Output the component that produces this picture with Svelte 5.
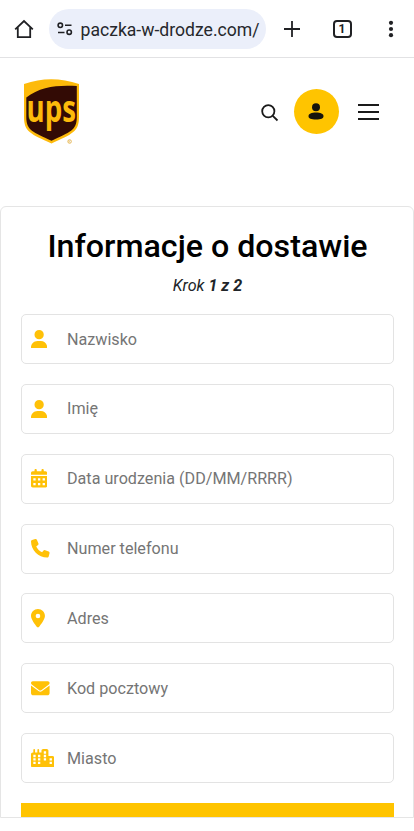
<script lang="ts">
  type Field = { label: string; icon: string; width: number };

  const USER =
    'M224 256A128 128 0 1 0 224 0a128 128 0 1 0 0 256zm-45.7 48C79.8 304 0 383.8 0 482.3C0 498.7 13.3 512 29.7 512H418.3c16.4 0 29.7-13.3 29.7-29.7C448 383.8 368.2 304 269.7 304H178.3z';
  const PHONE =
    'M164.9 24.6c-7.7-18.6-28-28.5-47.4-23.2l-88 24C12.1 30.2 0 46 0 64C0 311.4 200.6 512 448 512c18 0 33.8-12.1 38.6-29.5l24-88c5.3-19.4-4.6-39.7-23.2-47.4l-96-40c-16.3-6.8-35.2-2.1-46.3 11.6L304.7 368C234.3 334.7 177.3 277.7 144 207.3L193.3 167c13.7-11.2 18.4-30 11.6-46.3l-40-96z';
  const PIN =
    'M215.7 499.2C267 435 384 279.4 384 192C384 86 298 0 192 0S0 86 0 192c0 87.4 117 243 168.3 307.2c12.3 15.3 35.1 15.3 47.4 0zM192 128a64 64 0 1 1 0 128 64 64 0 1 1 0-128z';
  const ENVELOPE =
    'M48 64C21.5 64 0 85.5 0 112c0 15.1 7.1 29.3 19.2 38.4L236.8 313.6c11.4 8.5 27 8.5 38.4 0L492.8 150.4c12.1-9.1 19.2-23.3 19.2-38.4c0-26.5-21.5-48-48-48H48zM0 176V384c0 35.3 28.7 64 64 64H448c35.3 0 64-28.7 64-64V176L294.4 339.2c-22.8 17.1-54 17.1-76.8 0L0 176z';

  // square cut-outs for the calendar days and the building windows
  const holes = (points: number[][]) =>
    points.map(([x, y]) => `M${x} ${y}h64v64h-64z`).join('');

  const CALENDAR =
    'M128 0c17.7 0 32 14.3 32 32V64H288V32c0-17.7 14.3-32 32-32s32 14.3 32 32V64h48c26.5 0 48 21.5 48 48v48H0V112C0 85.5 21.5 64 48 64H96V32c0-17.7 14.3-32 32-32zM0 192H448V464c0 26.5-21.5 48-48 48H48c-26.5 0-48-21.5-48-48V192z' +
    holes([[64, 256], [192, 256], [320, 256], [64, 384], [192, 384], [320, 384]]);
  const CITY =
    'M480 48c0-26.5-21.5-48-48-48H336c-26.5 0-48 21.5-48 48V96H224V24c0-13.3-10.7-24-24-24s-24 10.7-24 24V96H112V24c0-13.3-10.7-24-24-24S64 10.7 64 24V96H48C21.5 96 0 117.5 0 144V464c0 26.5 21.5 48 48 48H592c26.5 0 48-21.5 48-48V240c0-26.5-21.5-48-48-48H480V48z' +
    holes([[64, 160], [192, 160], [64, 256], [192, 256], [64, 352], [192, 352],
      [352, 64], [352, 160], [352, 256], [512, 256], [512, 352]]);

  const fields: Field[] = [
    { label: 'Nazwisko', icon: USER, width: 448 },
    { label: 'Imię', icon: USER, width: 448 },
    { label: 'Data urodzenia (DD/MM/RRRR)', icon: CALENDAR, width: 448 },
    { label: 'Numer telefonu', icon: PHONE, width: 512 },
    { label: 'Adres', icon: PIN, width: 384 },
    { label: 'Kod pocztowy', icon: ENVELOPE, width: 512 },
    { label: 'Miasto', icon: CITY, width: 640 },
  ];
</script>

<div class="screen">
  <div class="browser-bar">
    <svg class="home" viewBox="0 0 20 20">
      <path d="M1.2 10.3 10 2l8.8 8.3M3.8 8.5V18.2H16.2V8.5" />
    </svg>
    <div class="address">
      <svg class="tune" viewBox="0 0 16 14">
        <circle cx="3.3" cy="3.3" r="2.2" />
        <path d="M8 3.3H14.5M1 10.5H7.5" />
        <circle cx="12.2" cy="10.2" r="2.2" />
      </svg>
      <span class="url">paczka-w-drodze.com/</span>
    </div>
    <svg class="plus" viewBox="0 0 16 16"><path d="M8 0V16M0 8H16" /></svg>
    <div class="tabs">1</div>
    <svg class="dots" viewBox="0 0 6 18">
      <circle cx="3" cy="2.8" r="2.1" />
      <circle cx="3" cy="9" r="2.1" />
      <circle cx="3" cy="15.2" r="2.1" />
    </svg>
  </div>

  <header>
    <svg class="logo" viewBox="0 0 56 66">
      <path class="gold" d="M0 5Q27-4.500 55 5V38C55 53 48 55 27.500 64.500C7 55 0 53 0 38z" />
      <path class="brown" d="M2.300 18.500C16 7.500 34 5.800 52.800 7V38C52.800 51.500 46 53 27.500 61.800C9 53 2.300 51.500 2.300 38z" />
      <text class="wordmark" x="2.600" y="42.500" textLength="49.500" lengthAdjust="spacingAndGlyphs">ups</text>
      <circle class="mark" cx="45.600" cy="62.500" r="1.800" />
      <text class="reg" x="44.600" y="63.600">R</text>
    </svg>
    <svg class="search" viewBox="0 0 18 18">
      <circle cx="7.3" cy="7.3" r="6.1" />
      <path d="M11.8 11.8 16.5 16.5" />
    </svg>
    <div class="account">
      <svg viewBox="0 0 16 17">
        <circle cx="8" cy="4.3" r="4" />
        <path d="M.5 13.2C.5 11 3.5 9.6 8 9.6s7.5 1.4 7.5 3.600c0 2.300-2.500 3.200-7.500 3.200S.5 15.500.5 13.200z" />
      </svg>
    </div>
    <div class="menu"><i></i><i></i><i></i></div>
  </header>

  <main>
    <h1>Informacje o dostawie</h1>
    <p class="step">Krok <b>1 z 2</b></p>
    <div class="fields">
      {#each fields as field}
        <div class="field">
          <span class="icon">
            <svg viewBox="0 0 {field.width} 512">
              <path fill-rule="evenodd" d={field.icon} />
            </svg>
          </span>
          <span class="label">{field.label}</span>
        </div>
      {/each}
    </div>
    <div class="submit"></div>
  </main>
</div>

<style>
  :global(body) {
    background: #fff;
  }

  .screen {
    width: 414px;
    height: 831px;
    overflow: hidden;
    background: #fff;
    font-family: Roboto, 'Liberation Sans', sans-serif;
  }

  svg {
    display: block;
    flex: none;
  }

  /* Browser bar */
  .browser-bar {
    display: flex;
    align-items: center;
    box-sizing: border-box;
    height: 58px;
    padding-left: 14px;
    border-bottom: 1px solid #e2e2e4;
  }

  .home,
  .plus,
  .tune,
  .search {
    fill: none;
    stroke: #202124;
    stroke-width: 1.8;
  }

  .home {
    width: 20px;
    height: 20px;
  }

  .address {
    display: flex;
    align-items: center;
    box-sizing: border-box;
    width: 217px;
    height: 40px;
    margin-left: 14.5px;
    padding-left: 8px;
    border-radius: 20px;
    background: #ebeffa;
  }

  .tune {
    width: 16px;
    height: 14px;
    stroke-width: 1.6;
  }

  .url {
    margin: 2px 0 0 8px;
    font-size: 17.6px;
    line-height: 24px;
    white-space: nowrap;
    color: #26282c;
  }

  .plus {
    width: 16px;
    height: 16px;
    margin-left: 18px;
  }

  .tabs {
    box-sizing: border-box;
    width: 19px;
    height: 18px;
    margin-left: 33px;
    border: 2px solid #202124;
    border-radius: 4px;
    font-size: 12px;
    font-weight: 700;
    line-height: 14px;
    text-align: center;
    color: #202124;
  }

  .dots {
    width: 6px;
    height: 18px;
    margin-left: 36px;
    fill: #202124;
  }

  /* Site header */
  header {
    display: flex;
    align-items: center;
    box-sizing: border-box;
    height: 148px;
    padding: 0 35px 41px 24px;
  }

  .logo {
    width: 56px;
    height: 66px;
    margin-top: 1px;
    overflow: visible;
  }

  .gold {
    fill: #fdba0b;
  }

  .brown {
    fill: #330b05;
  }

  .wordmark {
    fill: #fdba0b;
    font-family: 'Open Sans', sans-serif;
    font-size: 38px;
    font-weight: 700;
  }

  .mark {
    fill: none;
    stroke: #e5b552;
    stroke-width: 0.9;
  }

  .reg {
    fill: #e5b552;
    font-size: 3px;
  }

  .search {
    width: 18px;
    height: 18px;
    margin: 3px 14.5px 0 181px;
    stroke: #1a1a1a;
  }

  .account {
    display: flex;
    align-items: center;
    justify-content: center;
    width: 45px;
    height: 45px;
    border-radius: 50%;
    background: #ffc400;
  }

  .account svg {
    width: 16px;
    height: 17px;
    margin-right: 1px;
    fill: #17140c;
  }

  .menu {
    display: flex;
    flex-direction: column;
    gap: 5px;
    width: 21px;
    margin-left: 19px;
  }

  .menu i {
    height: 2px;
    background: #1a1a1a;
  }

  /* Delivery form */
  main {
    box-sizing: border-box;
    height: 612px;
    padding: 18px 19px 0 20px;
    overflow: hidden;
    border: 1px solid #e5e5e5;
    border-radius: 6px 6px 0 0;
  }

  h1 {
    margin: 0;
    font-size: 32.2px;
    font-weight: 500;
    line-height: 42px;
    text-align: center;
    white-space: nowrap;
    color: #000;
  }

  .step {
    margin: 9px 0 18px;
    font-size: 16.1px;
    font-style: italic;
    line-height: 20px;
    text-align: center;
    color: #212529;
  }

  .fields {
    display: flex;
    flex-direction: column;
    gap: 19.85px;
  }

  .field {
    display: flex;
    align-items: center;
    box-sizing: border-box;
    height: 50px;
    padding-left: 9px;
    border: 1px solid #e3e3e3;
    border-radius: 5px;
  }

  .icon {
    width: 36px;
  }

  .icon svg {
    height: 18.6px;
    fill: #ffc107;
  }

  .label {
    font-size: 16.15px;
    color: #757575;
  }

  .submit {
    height: 40px;
    margin-top: 20px;
    background: #ffc400;
  }
</style>
